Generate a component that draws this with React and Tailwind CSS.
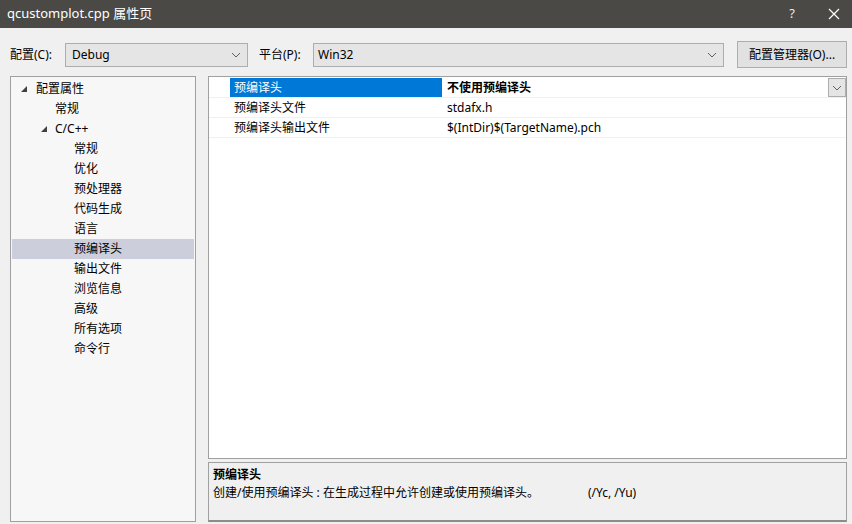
import React from 'react';

const font = { fontFamily: '"Noto Sans", "Noto Sans CJK SC", sans-serif' };

function Chevron({ className = '' }) {
  return (
    <svg width="10" height="6" viewBox="0 0 10 6" className={className}>
      <path d="M1 1 L5 5 L9 1" fill="none" stroke="#606060" strokeWidth="1" />
    </svg>
  );
}

function Arrow() {
  return (
    <svg width="6" height="6" viewBox="0 0 6 6">
      <polygon points="6,0 6,6 0,6" fill="#404040" />
    </svg>
  );
}

const children = ['常规', '优化', '预处理器', '代码生成', '语言', '预编译头', '输出文件', '浏览信息', '高级', '所有选项', '命令行'];

const rows = [
  { name: '预编译头', value: '不使用预编译头', selected: true },
  { name: '预编译头文件', value: 'stdafx.h' },
  { name: '预编译头输出文件', value: '$(IntDir)$(TargetName).pch' },
];

export default function App() {
  return (
    <div className="w-[852px] h-[524px] bg-[#f0f0f0] flex flex-col text-[12px] text-black overflow-hidden" style={font}>
      {/* title bar */}
      <div className="h-[28px] bg-[#4a4946] flex items-center justify-between text-white shrink-0">
        <span className="pl-[7px] text-[13px]">qcustomplot.cpp 属性页</span>
        <div className="flex items-center">
          <span className="w-[44px] text-center text-[13px] text-[#e8e8e8]">?</span>
          <svg width="12" height="12" viewBox="0 0 12 12" className="mr-[12px] ml-[14px]">
            <path d="M1 1 L11 11 M11 1 L1 11" stroke="#ffffff" strokeWidth="1.2" />
          </svg>
        </div>
      </div>

      {/* config row */}
      <div className="flex items-center h-[27px] mt-[13px] pl-[10px] pr-[5px] shrink-0">
        <span className="w-[55px]">配置(C):</span>
        <div className="w-[183px] h-[24px] bg-[#e5e5e5] border border-[#adadad] flex items-center justify-between pl-[6px] pr-[6px]">
          <span>Debug</span>
          <Chevron />
        </div>
        <span className="ml-[11px] w-[54px]">平台(P):</span>
        <div className="w-[411px] h-[24px] bg-[#e5e5e5] border border-[#adadad] flex items-center justify-between pl-[4px] pr-[6px]">
          <span>Win32</span>
          <Chevron />
        </div>
        <div className="ml-[13px] w-[110px] h-[27px] bg-[#e1e1e1] border border-[#adadad] flex items-center justify-center">
          配置管理器(O)...
        </div>
      </div>

      {/* panels */}
      <div className="flex flex-1 mt-[8px] mb-[2px] pl-[10px] pr-[5px] gap-[12px] min-h-0">
        {/* tree */}
        <div className="w-[186px] bg-[#f7f7f7] border border-[#a0a0a0] pt-[2px]">
          <div className="h-[20px] flex items-center pl-[10px]">
            <Arrow />
            <span className="ml-[9px]">配置属性</span>
          </div>
          <div className="h-[20px] flex items-center pl-[44px]">常规</div>
          <div className="h-[20px] flex items-center pl-[30px]">
            <Arrow />
            <span className="ml-[8px]">C/C++</span>
          </div>
          {children.map((c) => (
            <div
              key={c}
              className={`h-[20px] flex items-center pl-[62px] mx-[1px] ${c === '预编译头' ? 'bg-[#cccedb]' : ''}`}
            >
              {c}
            </div>
          ))}
        </div>

        {/* right side */}
        <div className="flex-1 flex flex-col gap-[3px]">
          <div className="flex-1 bg-white border border-[#a0a0a0] pt-[1px]">
            {rows.map((r) => (
              <div key={r.name} className="flex h-[20px] border-b border-[#f0f0f0]">
                <div className="w-[21px] shrink-0" />
                <div className={`w-[212px] shrink-0 flex items-center pl-[4px] ${r.selected ? 'bg-[#0078d7] text-white' : ''}`}>
                  {r.name}
                </div>
                <div className={`flex-1 flex items-center justify-between pl-[5px] ${r.selected ? 'font-bold' : ''}`}>
                  <span>{r.value}</span>
                  {r.selected && (
                    <div className="w-[18px] h-[19px] bg-[#e5e5e5] border border-[#adadad] flex items-center justify-center">
                      <Chevron />
                    </div>
                  )}
                </div>
              </div>
            ))}
          </div>
          <div className="h-[60px] bg-[#f0f0f0] border border-[#a0a0a0] border-b-2 border-b-[#8c8c8c] pl-[4px] pt-[4px] shrink-0">
            <div className="font-bold leading-[16px]">预编译头</div>
            <div className="leading-[20px]">
              创建/使用预编译头 : 在生成过程中允许创建或使用预编译头。<span className="ml-[49px]">(/Yc, /Yu)</span>
            </div>
          </div>
        </div>
      </div>
    </div>
  );
}
